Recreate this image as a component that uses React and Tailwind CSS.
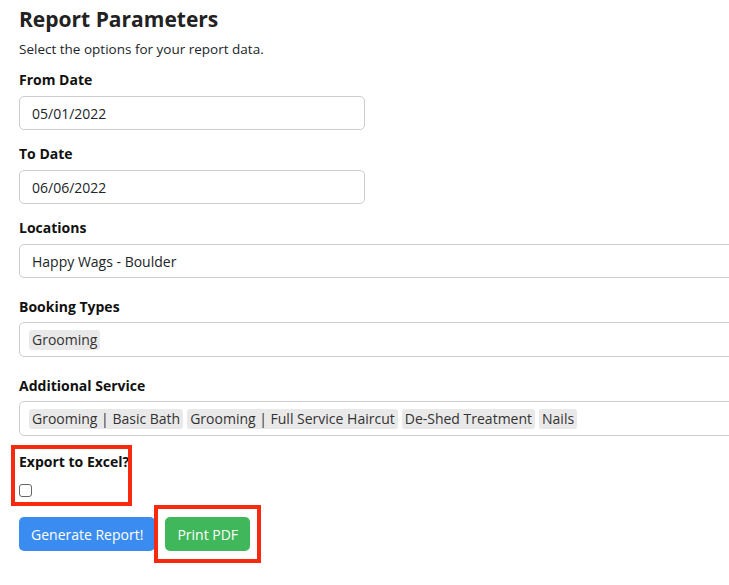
const font = { fontFamily: '"Open Sans", "Liberation Sans", sans-serif' };

function Label({ children, className = '' }) {
  return <p className={`text-[14px] font-bold text-[#111] leading-5 ${className}`}>{children}</p>;
}

function Chip({ children }) {
  return <span className="bg-[#e9e9e9] rounded-[3px] px-[3px] leading-5 text-[14px] text-[#333]">{children}</span>;
}

export default function App() {
  return (
    <div style={font} className="w-[729px] h-[585px] overflow-hidden bg-white pl-[19px] text-[#212529]">
      <h1 className="text-[21px] font-bold leading-7 pt-[5px] text-[#222]">Report Parameters</h1>
      <p className="text-[13.5px] mt-[6px] leading-5">Select the options for your report data.</p>

      <Label className="mt-[11px]">From Date</Label>
      <div className="mt-[6px] w-[346px] h-[34px] border border-[#ccc] rounded-[5px] flex items-center px-3 text-[14px]">05/01/2022</div>

      <Label className="mt-[14px]">To Date</Label>
      <div className="mt-[6px] w-[346px] h-[34px] border border-[#ccc] rounded-[5px] flex items-center px-3 text-[14px]">06/06/2022</div>

      <Label className="mt-[14px]">Locations</Label>
      <div className="mt-[6px] w-[740px] h-[34px] border border-[#ccc] rounded-[5px] flex items-center px-3 text-[14px]">Happy Wags - Boulder</div>

      <Label className="mt-[19px]">Booking Types</Label>
      <div className="mt-[5px] w-[740px] h-[35px] border border-[#ccc] rounded-[5px] flex items-center gap-1 px-[9px]">
        <Chip>Grooming</Chip>
      </div>

      <Label className="mt-[19px]">Additional Service</Label>
      <div className="mt-[5px] w-[740px] h-[35px] border border-[#ccc] rounded-[5px] flex items-center gap-[4px] px-[9px]">
        <Chip>Grooming | Basic Bath</Chip>
        <Chip>Grooming | Full Service Haircut</Chip>
        <Chip>De-Shed Treatment</Chip>
        <Chip>Nails</Chip>
      </div>

      <div className="relative mt-[16px] w-fit">
        <div className="absolute left-[-8px] top-[-7px] w-[121px] h-[61px] border-4 border-[#f72a10]" />
        <Label>Export to Excel?</Label>
        <div className="mt-[12px] w-[13px] h-[13px] border border-[#666] rounded-[3px] bg-white" />
      </div>

      <div className="flex gap-[10px] mt-[20px]">
        <button className="h-[34px] px-[12px] rounded-[5px] bg-[#3b8cf0] text-white text-[14px]">Generate Report!</button>
        <div className="relative">
          <div className="absolute left-[-11px] top-[-12px] w-[107px] h-[58px] border-4 border-[#f72a10]" />
          <button className="h-[34px] px-[12px] rounded-[5px] bg-[#40b75a] text-white text-[14px]">Print PDF</button>
        </div>
      </div>
    </div>
  );
}
